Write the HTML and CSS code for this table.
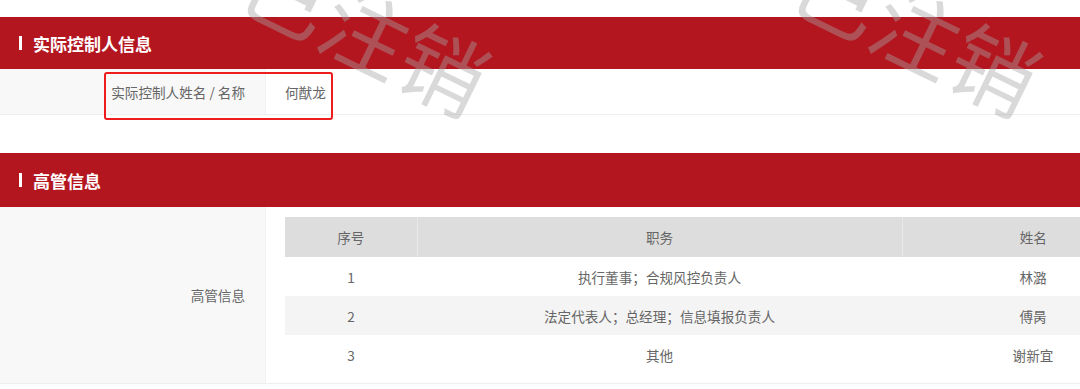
FILE: index.html
```html
<!DOCTYPE html>
<html lang="zh-CN">
<head>
<meta charset="utf-8">
<title>实际控制人信息</title>
<link rel="stylesheet" href="styles.css">
</head>
<body>
<div class="page">
  <section class="section">
    <div class="bar"><span class="bar-mark"></span><span class="bar-title">实际控制人信息</span></div>
    <div class="row">
      <div class="label">实际控制人姓名 / 名称</div>
      <div class="value">何猷龙</div>
    </div>
  </section>

  <section class="section second">
    <div class="bar"><span class="bar-mark"></span><span class="bar-title">高管信息</span></div>
    <div class="row tall">
      <div class="label">高管信息</div>
      <div class="value table-cell">
        <table class="grid">
          <colgroup>
            <col class="c1"><col class="c2"><col class="c3">
          </colgroup>
          <thead>
            <tr><th>序号</th><th>职务</th><th>姓名</th></tr>
          </thead>
          <tbody>
            <tr><td>1</td><td>执行董事；合规风控负责人</td><td>林潞</td></tr>
            <tr class="alt"><td>2</td><td>法定代表人；总经理；信息填报负责人</td><td>傅昺</td></tr>
            <tr><td>3</td><td>其他</td><td>谢新宜</td></tr>
          </tbody>
        </table>
      </div>
    </div>
  </section>

  <div class="highlight"></div>
  <div class="watermark wm1">已注销</div>
  <div class="watermark wm2">已注销</div>
</div>
</body>
</html>
```

FILE: styles.css
```css
html, body {
  margin: 0;
  padding: 0;
  background: #ffffff;
}
body {
  font-family: "Noto Sans CJK SC", "Noto Sans", sans-serif;
  color: #666666;
  font-size: 13.6px;
}
.page {
  position: relative;
  width: 1080px;
  height: 389px;
  overflow: hidden;
  padding-top: 17px;
  box-sizing: border-box;
}
.section.second {
  margin-top: 38px;
}
.bar {
  height: 52px;
  background: #b3161f;
  display: flex;
  align-items: center;
  padding-left: 19px;
  color: #ffffff;
}
.second .bar {
  height: 54px;
}
.bar-mark {
  width: 3px;
  height: 14px;
  background: #ffffff;
  margin-right: 11px;
}
.bar-title {
  font-size: 17px;
  font-weight: 700;
  line-height: 1;
}
.row {
  display: flex;
  height: 46px;
  border-bottom: 1px solid #eeeeee;
  box-sizing: border-box;
}
.row.tall {
  height: 177px;
}
.label {
  width: 266px;
  flex: none;
  box-sizing: border-box;
  background: #f8f8f8;
  padding-right: 20px;
  display: flex;
  align-items: center;
  justify-content: flex-end;
  border-right: 1px solid #f2f2f2;
}
.value {
  flex: 1;
  padding-left: 19px;
  display: flex;
  align-items: center;
  white-space: nowrap;
}
.value.table-cell {
  align-items: flex-start;
  padding-top: 10px;
}
.grid {
  border-collapse: collapse;
  width: 879px;
  flex: none;
  table-layout: fixed;
}
.grid col.c1 { width: 132px; }
.grid col.c2 { width: 485px; }
.grid col.c3 { width: 262px; }
.grid th {
  height: 40px;
  background: #dddddd;
  font-weight: 400;
  color: #666666;
  padding: 0;
  text-align: center;
  border-left: 1px solid #e9e9e9;
}
.grid th:first-child {
  border-left: none;
}
.grid td {
  height: 39px;
  padding: 0;
  text-align: center;
}
.grid tr.alt td {
  background: #f4f4f4;
}
.highlight {
  position: absolute;
  left: 104px;
  top: 72px;
  width: 229px;
  height: 48px;
  box-sizing: border-box;
  border: 2.5px solid #ee1c1c;
  border-radius: 3px;
  pointer-events: none;
}
.watermark {
  position: absolute;
  top: -14px;
  width: 258px;
  height: 86px;
  font-size: 86px;
  line-height: 86px;
  text-align: center;
  white-space: nowrap;
  color: rgba(165, 165, 165, 0.42);
  transform: rotate(26deg);
  transform-origin: 50% 50%;
  pointer-events: none;
}
.wm1 { left: 238px; }
.wm2 { left: 789px; }
```
